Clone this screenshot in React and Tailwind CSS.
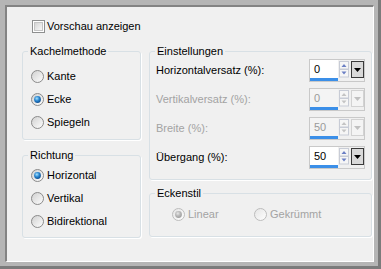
import { useId } from "react";

function Radio({ checked, disabled }) {
  const id = useId();
  return (
    <svg width="13" height="13" viewBox="0 0 13 13" className="shrink-0">
      <defs>
        <linearGradient id={id + "b"} x1="0" y1="0" x2="1" y2="1">
          <stop offset="0" stopColor={disabled ? "#e4e4e4" : "#cfcfcf"} />
          <stop offset="1" stopColor="#ffffff" />
        </linearGradient>
        <radialGradient id={id + "d"} cx="0.4" cy="0.35" r="0.7">
          <stop offset="0" stopColor={disabled ? "#e8e8e8" : "#a6e3ff"} />
          <stop offset="0.5" stopColor={disabled ? "#b8b8b8" : "#2a86d0"} />
          <stop offset="1" stopColor={disabled ? "#9c9c9c" : "#0b4a8c"} />
        </radialGradient>
      </defs>
      <circle cx="6.5" cy="6.5" r="6" fill={`url(#${id}b)`} stroke={disabled ? "#bcbcbc" : "#8a8a8a"} />
      {checked && <circle cx="6.5" cy="6.5" r="3.4" fill={`url(#${id}d)`} />}
    </svg>
  );
}

function RadioRow({ label, checked, disabled }) {
  return (
    <div className="flex h-[23px] items-center gap-[3px]">
      <Radio checked={checked} disabled={disabled} />
      <span className={disabled ? "text-[#a3a3a3]" : "text-black"}>{label}</span>
    </div>
  );
}

function Spin({ value, disabled }) {
  const arrow = disabled ? "#c4c4c4" : "#6b7fc4";
  return (
    <div className="flex h-[23px] w-[56px] border border-[#c9c9c9] bg-[#f0f0f0]">
      <div className="flex w-[28px] flex-col">
        <div
          className={`h-[18px] pl-[4px] leading-[18px] ${
            disabled ? "bg-[#f4f4f4] text-[#9a9a9a]" : "bg-white text-black"
          }`}
        >
          {value}
        </div>
        <div className="h-[3px] bg-[#3b8fe8]" />
      </div>
      <svg width="10" height="17" viewBox="0 0 10 17" className="ml-[1px] mt-[1px]">
        <rect x="0.5" y="0.5" width="9" height="7.5" fill="#f6f6f6" stroke="#c8ccd6" />
        <rect x="0.5" y="8.5" width="9" height="7.5" fill="#f6f6f6" stroke="#c8ccd6" />
        <path d="M2.5 6 L5 3 L7.5 6 Z" fill={arrow} />
        <path d="M2.5 10.5 L5 13.5 L7.5 10.5 Z" fill={arrow} />
      </svg>
      <div
        className={`ml-[2px] mt-[1px] flex h-[17px] w-[13px] items-center justify-center border ${
          disabled ? "border-[#d2d2d2] bg-[#f4f4f4]" : "border-[#3a3a3a] bg-[#d9d9d9]"
        }`}
      >
        <svg width="7" height="4" viewBox="0 0 7 4">
          <path d="M0 0 L7 0 L3.5 4 Z" fill={disabled ? "#c0c0c0" : "#000"} />
        </svg>
      </div>
    </div>
  );
}

function Field({ label, value, disabled }) {
  return (
    <div className="flex h-[22px] items-start">
      <span className={`w-[153px] leading-[22px] ${disabled ? "text-[#a3a3a3]" : "text-black"}`}>{label}</span>
      <Spin value={value} disabled={disabled} />
    </div>
  );
}

function Group({ title, className, children }) {
  return (
    <fieldset className="rounded-[3px] border border-[#d8e0e5] shadow-[1px_1px_0_#ffffff]">
      <legend className="ml-[5px] px-[2px] leading-[13px] text-black">{title}</legend>
      <div className={className}>{children}</div>
    </fieldset>
  );
}

export default function App() {
  return (
    <div
      className="h-[269px] w-[381px] border-b-[3px] border-r-[3px] border-[#7b7b7b] bg-[#b5b5b5] pb-[4px] pl-[5px] pr-[4px] pt-[5px] text-[11px]"
      style={{ fontFamily: '"Liberation Sans", Arial, sans-serif' }}
    >
      <div className="flex h-full flex-col border-b border-l-2 border-r border-t-2 border-b-white border-l-[#838383] border-r-white border-t-[#838383] bg-[#f0f0f0]">
        <div className="ml-[25px] mt-[13px] flex h-[13px] items-center gap-[2px]">
          <svg width="13" height="13" viewBox="0 0 13 13">
            <defs>
              <linearGradient id="cb" x1="0" y1="0" x2="1" y2="1">
                <stop offset="0" stopColor="#d2d2d2" />
                <stop offset="1" stopColor="#fafafa" />
              </linearGradient>
            </defs>
            <rect x="0.5" y="0.5" width="12" height="12" fill="#fff" stroke="#8e8f8f" />
            <rect x="2.5" y="2.5" width="8" height="8" fill="url(#cb)" stroke="#c4c4c4" />
          </svg>
          <span className="text-black">Vorschau anzeigen</span>
        </div>

        <div className="ml-[15px] mt-[12px] flex gap-[8px]">
          <div className="flex w-[119px] flex-col gap-[9px]">
            <Group title="Kachelmethode" className="pb-[5px] pl-[8px] pt-[7px]">
              <RadioRow label="Kante" />
              <RadioRow label="Ecke" checked />
              <RadioRow label="Spiegeln" />
            </Group>
            <Group title="Richtung" className="pb-[4px] pl-[8px] pt-[2px]">
              <RadioRow label="Horizontal" checked />
              <RadioRow label="Vertikal" />
              <RadioRow label="Bidirektional" />
            </Group>
          </div>

          <div className="flex w-[223px] flex-col gap-[7px]">
            <Group title="Einstellungen" className="pb-[11px] pl-[6px] pt-[1px]">
              <div className="flex flex-col gap-[7px]">
                <Field label="Horizontalversatz (%):" value="0" />
                <Field label="Vertikalversatz (%):" value="0" disabled />
                <Field label="Breite (%):" value="50" disabled />
                <Field label="Übergang (%):" value="50" />
              </div>
            </Group>
            <Group title="Eckenstil" className="pb-[10px] pl-[22px] pt-[3px]">
              <div className="flex">
                <div className="w-[82px]">
                  <RadioRow label="Linear" checked disabled />
                </div>
                <RadioRow label="Gekrümmt" disabled />
              </div>
            </Group>
          </div>
        </div>
      </div>
    </div>
  );
}
